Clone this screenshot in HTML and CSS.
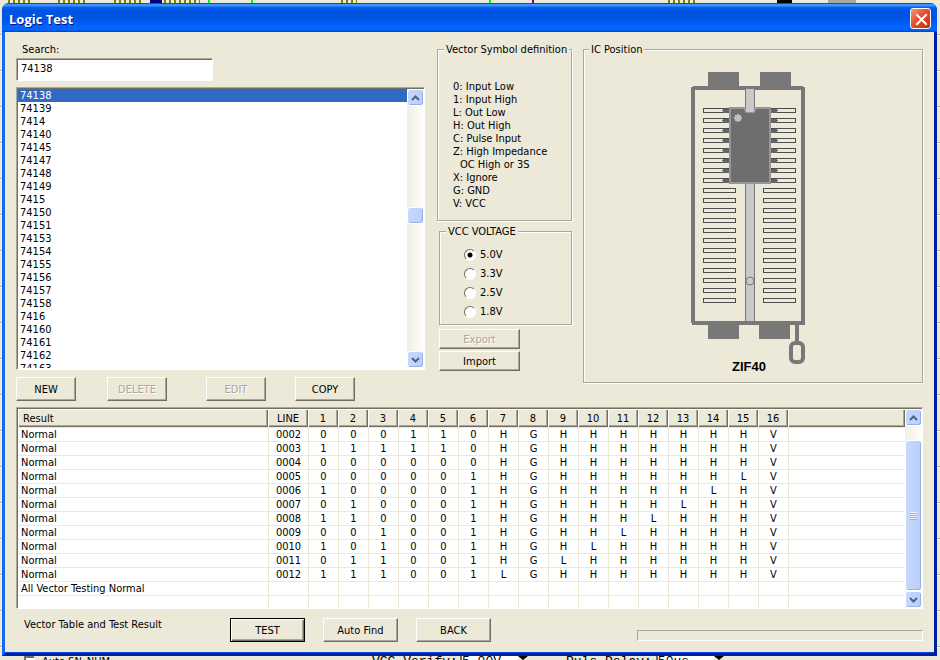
FILE: index.html
```html
<!DOCTYPE html>
<html lang="en">
<head>
<meta charset="utf-8">
<title>Logic Test</title>
<link rel="stylesheet" href="styles.css">
</head>
<body>
<div class="strip strip-top" aria-hidden="true"><i class="mark olive m1"></i><i class="mark olive m2"></i><i class="mark olive m3"></i><i class="mark navy"></i><i class="mark olive m4"></i><i class="mark lime m5"></i><i class="mark lime m6"></i><i class="mark olive m7"></i><i class="mark lime m8"></i><i class="mark purple m9"></i><i class="mark olive m10"></i><i class="mark black m11"></i><i class="mark grey m12"></i></div>
<main class="dialog">
  <header class="titlebar">
    <h1>Logic Test</h1>
    <button class="close" type="button" aria-label="Close"><svg viewBox="0 0 21 21" width="21" height="21"><path d="M6 6l9 9M15 6l-9 9" stroke="#fff" stroke-width="2" stroke-linecap="square"/></svg></button>
  </header>
  <div class="client">
    <div class="upper">
      <section class="devices">
        <label class="search-label" for="search">Search:</label>
        <input class="search sunken" id="search" type="text" value="74138">
        <div class="listbox sunken">
          <select size="22" aria-label="Devices">
            <option selected>74138</option><option>74139</option><option>7414</option><option>74140</option><option>74145</option><option>74147</option><option>74148</option><option>74149</option><option>7415</option><option>74150</option><option>74151</option><option>74153</option><option>74154</option><option>74155</option><option>74156</option><option>74157</option><option>74158</option><option>7416</option><option>74160</option><option>74161</option><option>74162</option><option>74163</option>
          </select>
          <div class="scrollbar">
            <button type="button" aria-label="Scroll list up"><svg viewBox="0 0 9 6" width="9" height="6"><path d="M1 5l3.500-3.500L8 5"/></svg></button>
            <div class="track"><div class="space-before"></div><div class="thumb"></div><div class="space-after"></div></div>
            <button type="button" aria-label="Scroll list down"><svg viewBox="0 0 9 6" width="9" height="6"><path d="M1 1l3.500 3.500L8 1"/></svg></button>
          </div>
        </div>
        <div class="actions">
          <button class="btn" type="button">NEW</button>
          <button class="btn" type="button" disabled>DELETE</button>
          <button class="btn" type="button" disabled>EDIT</button>
          <button class="btn" type="button">COPY</button>
        </div>
      </section>
      <section class="settings">
        <fieldset class="symbols">
          <legend>Vector Symbol definition</legend>
          <ul>
            <li>0: Input Low</li><li>1: Input High</li><li>L: Out Low</li><li>H: Out High</li><li>C: Pulse Input</li><li>Z: High Impedance</li><li class="indent">OC High or 3S</li><li>X: Ignore</li><li>G: GND</li><li>V: VCC</li>
          </ul>
        </fieldset>
        <fieldset class="voltage">
          <legend>VCC VOLTAGE</legend>
          <label><input type="radio" name="vcc" checked>5.0V</label>
          <label><input type="radio" name="vcc">3.3V</label>
          <label><input type="radio" name="vcc">2.5V</label>
          <label><input type="radio" name="vcc">1.8V</label>
        </fieldset>
        <div class="transfer">
          <button class="btn" type="button" disabled>Export</button>
          <button class="btn" type="button">Import</button>
        </div>
      </section>
      <fieldset class="position">
        <legend>IC Position</legend>
        <svg class="socket" viewBox="0 0 116 304" width="116" height="304" role="img" aria-label="ZIF40 socket">
          <defs>
            <g id="slots5"><path d="M.5 .5h32v4h-32zM.5 10.500h32v4h-32zM.5 20.500h32v4h-32zM.5 30.500h32v4h-32zM.5 40.500h32v4h-32z" fill="none" stroke="#4c4c4c"/></g>
            <g id="slots"><use href="#slots5"/><use href="#slots5" y="50"/><use href="#slots5" y="100"/><use href="#slots5" y="150"/></g>
          </defs>
          <g shape-rendering="crispEdges">
            <path d="M18 2h31v16H18zM70 2h31v16H70zM18 253h31v16H18zM69 253h31v16H69z" fill="#787878"/>
            <path d="M55 19h10v234H55z" fill="#c8c8c8"/>
            <path d="M55.500 19v234M64.500 19v234" stroke="#787878"/>
            <path d="M3 16h110v1h2v238H2v-2H1V17h2zM5 20v231h106V20z" fill="#787878" fill-rule="evenodd"/>
            <use href="#slots" x="13" y="38"/><use href="#slots" x="73" y="38"/>
            <path d="M36 38.500v75M84 38.500v75" stroke="#646464" stroke-width="6" stroke-dasharray="4 6"/>
            <path d="M32.500 40v75M87.500 40v75" stroke="#646464" stroke-dasharray="1 9"/>
            <path d="M40 38h40v75H40z" fill="#6e6e6e" stroke="#969696" stroke-width="2"/>
            <path d="M56 36h8v6h-8z" fill="#c8c8c8"/>
            <path d="M56 19h8v22h-8z" fill="#c8c8c8"/>
            <path d="M54 37v4h1v2h10v-2h1v-4h-2v4h-8v-4z" fill="#969696"/>
            <path d="M56 37h8v5h-8z" fill="#c8c8c8"/>
            <path d="M47 44h2v1h2v2h1v2h-1v2h-2v1h-2v-1h-2v-2h-1v-2h1v-2h2z" fill="#bebebe"/>
            <path d="M105 255h4v17h-4z" fill="#787878"/>
          </g>
          <circle cx="60" cy="211" r="4" fill="#c8c8c8" stroke="#787878"/>
          <rect x="101" y="273" width="12" height="19" rx="4" fill="none" stroke="#787878" stroke-width="4"/>
          <text x="59" y="301" text-anchor="middle">ZIF40</text>
        </svg>
      </fieldset>
    </div>
    <section class="results sunken">
      <div class="grid">
        <table>
          <colgroup><col class="c-result"><col class="c-line"><col class="c-pin" span="16"><col></colgroup>
          <thead><tr><th>Result</th><th>LINE</th><th>1</th><th>2</th><th>3</th><th>4</th><th>5</th><th>6</th><th>7</th><th>8</th><th>9</th><th>10</th><th>11</th><th>12</th><th>13</th><th>14</th><th>15</th><th>16</th><th></th></tr></thead>
          <tbody>
            <tr><td>Normal</td><td>0002</td><td>0</td><td>0</td><td>0</td><td>1</td><td>1</td><td>0</td><td>H</td><td>G</td><td>H</td><td>H</td><td>H</td><td>H</td><td>H</td><td>H</td><td>H</td><td>V</td><td></td></tr>
            <tr><td>Normal</td><td>0003</td><td>1</td><td>1</td><td>1</td><td>1</td><td>1</td><td>0</td><td>H</td><td>G</td><td>H</td><td>H</td><td>H</td><td>H</td><td>H</td><td>H</td><td>H</td><td>V</td><td></td></tr>
            <tr><td>Normal</td><td>0004</td><td>0</td><td>0</td><td>0</td><td>0</td><td>0</td><td>0</td><td>H</td><td>G</td><td>H</td><td>H</td><td>H</td><td>H</td><td>H</td><td>H</td><td>H</td><td>V</td><td></td></tr>
            <tr><td>Normal</td><td>0005</td><td>0</td><td>0</td><td>0</td><td>0</td><td>0</td><td>1</td><td>H</td><td>G</td><td>H</td><td>H</td><td>H</td><td>H</td><td>H</td><td>H</td><td>L</td><td>V</td><td></td></tr>
            <tr><td>Normal</td><td>0006</td><td>1</td><td>0</td><td>0</td><td>0</td><td>0</td><td>1</td><td>H</td><td>G</td><td>H</td><td>H</td><td>H</td><td>H</td><td>H</td><td>L</td><td>H</td><td>V</td><td></td></tr>
            <tr><td>Normal</td><td>0007</td><td>0</td><td>1</td><td>0</td><td>0</td><td>0</td><td>1</td><td>H</td><td>G</td><td>H</td><td>H</td><td>H</td><td>H</td><td>L</td><td>H</td><td>H</td><td>V</td><td></td></tr>
            <tr><td>Normal</td><td>0008</td><td>1</td><td>1</td><td>0</td><td>0</td><td>0</td><td>1</td><td>H</td><td>G</td><td>H</td><td>H</td><td>H</td><td>L</td><td>H</td><td>H</td><td>H</td><td>V</td><td></td></tr>
            <tr><td>Normal</td><td>0009</td><td>0</td><td>0</td><td>1</td><td>0</td><td>0</td><td>1</td><td>H</td><td>G</td><td>H</td><td>H</td><td>L</td><td>H</td><td>H</td><td>H</td><td>H</td><td>V</td><td></td></tr>
            <tr><td>Normal</td><td>0010</td><td>1</td><td>0</td><td>1</td><td>0</td><td>0</td><td>1</td><td>H</td><td>G</td><td>H</td><td>L</td><td>H</td><td>H</td><td>H</td><td>H</td><td>H</td><td>V</td><td></td></tr>
            <tr><td>Normal</td><td>0011</td><td>0</td><td>1</td><td>1</td><td>0</td><td>0</td><td>1</td><td>H</td><td>G</td><td>L</td><td>H</td><td>H</td><td>H</td><td>H</td><td>H</td><td>H</td><td>V</td><td></td></tr>
            <tr><td>Normal</td><td>0012</td><td>1</td><td>1</td><td>1</td><td>0</td><td>0</td><td>1</td><td>L</td><td>G</td><td>H</td><td>H</td><td>H</td><td>H</td><td>H</td><td>H</td><td>H</td><td>V</td><td></td></tr>
            <tr><td>All Vector Testing Normal</td><td></td><td></td><td></td><td></td><td></td><td></td><td></td><td></td><td></td><td></td><td></td><td></td><td></td><td></td><td></td><td></td><td></td><td></td></tr>
            <tr><td></td><td></td><td></td><td></td><td></td><td></td><td></td><td></td><td></td><td></td><td></td><td></td><td></td><td></td><td></td><td></td><td></td><td></td><td></td></tr>
          </tbody>
        </table>
      </div>
      <div class="scrollbar">
        <button type="button" aria-label="Scroll results up"><svg viewBox="0 0 9 6" width="9" height="6"><path d="M1 5l3.500-3.500L8 5"/></svg></button>
        <div class="track"><div class="space-top"></div><div class="thumb fill"><span class="grip"></span></div></div>
        <button type="button" aria-label="Scroll results down"><svg viewBox="0 0 9 6" width="9" height="6"><path d="M1 1l3.500 3.500L8 1"/></svg></button>
      </div>
    </section>
    <footer class="footer">
      <span class="caption">Vector Table and Test Result</span>
      <button class="btn default" type="button">TEST</button>
      <button class="btn" type="button">Auto Find</button>
      <button class="btn" type="button">BACK</button>
      <div class="progress" role="progressbar" aria-label="Test progress"></div>
    </footer>
  </div>
</main>
<div class="strip strip-bottom" aria-hidden="true"><span class="box b1"></span><span class="t1">Auto SN_NUM</span><span class="t2">VCC Verify:</span><span class="box b2">5.00V</span><span class="arrow"></span><span class="t3">Puls Delay:</span><span class="box b2">50us</span><span class="arrow"></span></div>
</body>
</html>
```
FILE: styles.css
```css
:root {
  --face: #ece9d8;
  --shade: #aca899;
  --dark: #716f64;
}
* { box-sizing: border-box; }
body {
  margin: 0;
  height: 100vh;
  display: flex;
  flex-direction: column;
  overflow: hidden;
  background: repeating-linear-gradient(#ece9d8 0 34px, #aca899 34px 35px, #fff 35px 36px);
  font: 11px/13px "DejaVu Sans Condensed", "DejaVu Sans", sans-serif;
  color: #000;
}
button, input, select { font: inherit; color: inherit; }
ul { list-style: none; margin: 0; padding: 0; }

/* Slivers of the window behind the dialog */
.strip { flex: none; display: flex; overflow: hidden; background: var(--face); }
.strip-top { height: 3px; }
.strip-bottom { height: 4px; font: 13px/11px "Liberation Mono", monospace; white-space: nowrap; }
.mark { height: 3px; flex: none; }
.olive { background: repeating-linear-gradient(90deg, #808000 0 2px, #ece9d8 2px 5px); }
.navy { background: #000080; width: 12px; margin-left: 8px; }
.lime { background: #0f0; width: 2px; }
.purple { background: #800080; width: 2px; }
.black { background: #000; }
.grey { background: #aca899; }
.m1 { width: 23px; margin-left: 8px; }
.m2 { width: 28px; margin-left: 27px; }
.m3 { width: 28px; margin-left: 28px; }
.m4 { width: 36px; margin-left: 2px; }
.m5 { margin-left: 8px; }
.m6 { margin-left: 41px; }
.m7 { width: 16px; margin-left: 88px; }
.m8 { margin-left: 132px; }
.m9 { margin-left: 41px; }
.m10 { width: 30px; margin-left: 134px; }
.m11 { width: 15px; margin-left: 79px; }
.m12 { width: 28px; margin-left: 36px; }
.strip-bottom span { flex: none; }
.box { background: #fff; border: solid #716f64; border-width: 2px 0 0 2px; }
.b1 { width: 10px; margin-left: 24px; }
.t1 { margin-left: 8px; width: 330px; font-family: "DejaVu Sans Condensed", sans-serif; font-size: 11px; }
.t2 { width: 88px; }
.strip-bottom .b2 { width: 58px; border-top: 0; }
.arrow { width: 0; height: 0; border: solid transparent; border-width: 4px 5px 0; border-top-color: #000; }
.t3 { margin: 0 4px 0 38px; }

.dialog {
  flex: 1;
  min-height: 0;
  margin: 0 3px 0 2px;
  display: flex;
  flex-direction: column;
  border: solid #0831d9;
  border-width: 0 3px 3px;
  border-color: #0831d9 #001ea0 #001ea0 #166aee;
  border-radius: 7px 7px 0 0;
  background: var(--face);
  box-shadow: inset 0 -1px 0 #0048e0;
}
.titlebar {
  flex: none;
  height: 29px;
  margin: 0 -3px;
  padding: 0 6px 0 7px;
  display: flex;
  align-items: center;
  justify-content: space-between;
  border-radius: 7px 7px 0 0;
  background: linear-gradient(#0050dc 0 1px, #3a93ff 1px 3px, #0a60ee 4px, #0055e5 7px, #0053e1 14px, #005cf5 20px, #0068ff 25px, #0064fb 27px, #003dd2 29px);
}
.titlebar h1 {
  margin: 0;
  padding-top: 2px;
  color: #fff;
  font: bold 13px/20px "Open Sans", "Noto Sans", sans-serif;
  text-shadow: 1px 1px 0 #0f1089;
}
.close {
  width: 21px;
  height: 21px;
  margin-top: 1px;
  padding: 0;
  display: grid;
  place-items: center;
  border: 1px solid #fff;
  border-radius: 3px;
  background: linear-gradient(135deg, #ee9a80, #e25030 45%, #c83008);
}

.client {
  flex: 1;
  min-height: 0;
  padding: 11px 11px 11px;
  display: flex;
  flex-direction: column;
}
.upper {
  flex: none;
  display: grid;
  grid-template-columns: minmax(409px, 1fr) 136px minmax(200px, 340px);
  column-gap: 11px;
}

.sunken {
  border: 1px solid;
  border-color: var(--shade) #fff #fff var(--shade);
  box-shadow: inset 1px 1px 0 var(--dark);
  background: #fff;
}
.devices { display: flex; flex-direction: column; }
.search-label { padding-left: 6px; }
.search {
  width: 197px;
  height: 23px;
  margin-top: 2px;
  padding: 0 4px 2px;
  border-radius: 0;
  outline: 0;
}
.listbox { display: flex; height: 283px; margin-top: 6px; padding: 1px 0 1px 1px; }
.listbox select {
  flex: 1;
  height: 279px;
  padding: 0;
  border: 0;
  border-radius: 0;
  outline: 0;
  background: #fff;
  overflow: hidden;
}
.listbox option { height: 13px; min-height: 13px; padding: 0 2px; line-height: 13px; }
.listbox option:checked { color: #fff; background: linear-gradient(#316ac5, #316ac5); }

.scrollbar {
  flex: none;
  width: 17px;
  display: flex;
  flex-direction: column;
  background: linear-gradient(90deg, #f0eee8, #fefefb);
}
.scrollbar button, .thumb {
  border: 1px solid #fff;
  border-radius: 3px;
  background: linear-gradient(90deg, #c9d8fc, #b9cffb);
  box-shadow: inset -1px -1px 0 #98b1e4;
}
.scrollbar button { flex: none; height: 17px; padding: 0; display: grid; place-items: center; }
.scrollbar path { fill: none; stroke: #4d6185; stroke-width: 2; }
.track { flex: 1; min-height: 0; display: flex; flex-direction: column; }
.thumb { flex: none; height: 17px; }
.space-before { flex: 101; }
.space-after { flex: 127; }
.space-top { height: 14px; }
.fill { flex: 1; display: grid; place-items: center; }
.grip { width: 7px; height: 8px; background: repeating-linear-gradient(#eef4fe 0 1px, #8cb0f8 1px 2px); }

.btn {
  padding: 0;
  border: 1px solid;
  border-color: #fff var(--dark) var(--dark) #fff;
  border-radius: 0;
  background: var(--face);
  box-shadow: inset -1px -1px 0 var(--shade);
}
.btn:disabled { color: var(--shade); text-shadow: 1px 1px 0 #fff; }
.actions { display: grid; grid-template-columns: 91px 99px 89px 60px; margin-top: 7px; }
.actions .btn { width: 60px; height: 24px; }

fieldset {
  min-width: 0;
  margin: 0;
  padding: 0;
  border: 1px solid var(--shade);
  box-shadow: 1px 1px 0 #fff, inset 1px 1px 0 #fff;
}
legend { margin-left: 6px; padding: 0 2px; background: var(--face); white-space: nowrap; }
.settings { display: flex; flex-direction: column; gap: 4px; padding-left: 1px; }
.symbols ul { padding: 24px 0 10px 15px; white-space: nowrap; }
.symbols .indent { padding-left: 7px; }
.voltage { margin-left: 2px; }
.voltage label { display: flex; align-items: center; gap: 4px; height: 19px; margin-left: 24px; }
.voltage legend + label { margin-top: 7px; }
.voltage label:last-child { margin-bottom: 3px; }
.voltage input {
  appearance: none;
  width: 12px;
  height: 12px;
  margin: 0;
  border: 1px solid;
  border-color: var(--dark) #fff #fff var(--dark);
  border-radius: 50%;
  background: #fff;
}
.voltage input:checked { background: radial-gradient(circle, #000 0 2px, #fff 3px); }
.transfer { display: grid; gap: 2px; margin: 0 0 0 2px; width: 81px; }
.transfer .btn { height: 20px; }
.position { margin-bottom: 18px; padding-right: 10px; }
.position legend { margin-left: 5px; }
.socket { display: block; margin: 14px auto 0; }
.socket text { font: bold 13px "Liberation Sans", sans-serif; }

.results { flex: 1; min-height: 0; display: flex; margin-top: 6px; padding: 1px 0 0 1px; }
.grid { flex: 1; min-width: 0; overflow: hidden; }
table { width: 100%; table-layout: fixed; border-collapse: separate; border-spacing: 0; }
.c-result { width: 250px; }
.c-line { width: 40px; }
.c-pin { width: 30px; }
th {
  height: 19px;
  padding: 0;
  font-weight: normal;
  background: var(--face);
  border-bottom: 1px solid var(--face);
  box-shadow: inset 1px 1px 0 #fff, inset -1px -1px 0 var(--dark), inset -2px -2px 0 var(--shade);
}
td { height: 14px; padding: 1px 0 0; line-height: 12px; border: solid var(--face); border-width: 0 0 1px 1px; text-align: center; }
th:first-child { padding-left: 5px; text-align: left; }
td:first-child { padding-left: 3px; border-left: 0; text-align: left; }

.footer { flex: none; display: flex; margin-top: 9px; }
.caption { width: 214px; padding-left: 8px; white-space: nowrap; }
.footer .btn { width: 75px; height: 24px; margin-right: 18px; }
.footer .default { outline: 1px solid #000; outline-offset: -1px; box-shadow: inset 1px 1px 0 #fff, inset -1px -1px 0 var(--dark), inset -2px -2px 0 var(--shade); }
.progress {
  flex: 1;
  align-self: flex-end;
  height: 11px;
  margin: 0 0 1px 128px;
  border: 1px solid;
  border-color: var(--shade) #fff #fff var(--shade);
}
```
